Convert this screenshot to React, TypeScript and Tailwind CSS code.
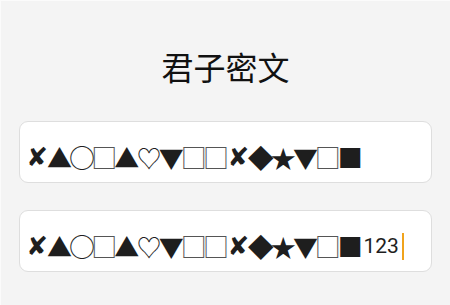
import React from "react";

const SYMS = ["✘", "▲", "○", "□", "▲", "♡", "▼", "□", "□", "✘", "◆", "★", "▼", "□", "■"];

const CLS: Record<string, string> = {
  "▲": "text-[25px] tracking-[-2.64px] left-[-1.32px]",
  "▼": "text-[25px] tracking-[-2.64px] left-[-1.32px]",
  "○": "text-[26px] tracking-[-3.64px] left-[-1.82px]",
  "□": "text-[26px] tracking-[-3.64px] left-[-1.82px] text-[#555]",
  "♡": "text-[25px] tracking-[-2.64px] left-[-1.32px]",
  "◆": "text-[26px] tracking-[-3.64px] left-[-1.82px]",
  "★": "text-[25px] tracking-[-2.64px] left-[-1.32px]",
  "■": "text-[25px] tracking-[-2.64px] left-[-1.32px]",
};

function Glyph({ s }: { s: string }) {
  if (s === "✘") {
    return (
      <span className="inline-flex w-[22.36px] h-[30px] items-center justify-center">
        <span
          className="relative left-[-3px] text-[#1e1e1e] text-[26px] leading-none tracking-[-6px]"
          style={{ fontFamily: '"DejaVu Sans", sans-serif' }}
        >
          {s}
        </span>
      </span>
    );
  }
  return (
    <span className="inline-flex w-[22.36px] h-[30px] items-center">
      <span
        className={`relative inline-block text-[#1e1e1e] leading-none whitespace-nowrap ${CLS[s]}`}
        style={{ fontFamily: '"Noto Sans CJK SC", "DejaVu Sans", sans-serif' }}
      >
        {s}
      </span>
    </span>
  );
}

function Field({ withText }: { withText?: boolean }) {
  return (
    <div className="mx-[18px] h-[62px] rounded-[9px] border border-[#dedede] bg-white pl-[6px] flex items-center">
      <div className="flex items-center pt-[10px]">
        {SYMS.map((s, i) => (
          <Glyph key={i} s={s} />
        ))}
        {withText && (
          <>
            <span
              className="text-[#1e1e1e] text-[21px] leading-none ml-[2px]"
              style={{ fontFamily: "Roboto, sans-serif" }}
            >
              123
            </span>
            <span className="ml-[3px] w-[2px] h-[27px] bg-[#f0a31c]" />
          </>
        )}
      </div>
    </div>
  );
}

export default function App() {
  return (
    <div className="w-[450px] h-[305px] bg-[#f4f4f4] border-t border-l border-[#fbfbfb] overflow-hidden">
      <div
        className="h-[120px] flex items-center justify-center pt-[9px] text-[32px] text-[#111]"
        style={{ fontFamily: '"Noto Sans CJK SC", sans-serif' }}
      >
        君子密文
      </div>
      <Field />
      <div className="h-[27px]" />
      <Field withText />
    </div>
  );
}
